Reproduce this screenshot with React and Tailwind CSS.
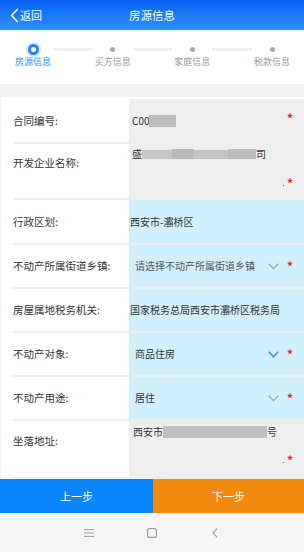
import React from "react";

function Step({ label, active }) {
  return (
    <div className="w-[40px] flex flex-col items-center">
      <div className="h-[11px] flex items-center justify-center">
        {active ? (
          <div className="w-[11px] h-[11px] rounded-full border-[3px] border-[#1f88f5] bg-white ring-2 ring-[#1f88f5]/20" />
        ) : (
          <div className="w-[5px] h-[5px] rounded-full bg-[#a9a9a9]" />
        )}
      </div>
      <div className={"mt-[1px] text-[9px] leading-[12px] whitespace-nowrap " + (active ? "text-[#2b8cf6]" : "text-[#9a9a9a]")}>
        {label}
      </div>
    </div>
  );
}

function Chevron({ color }) {
  return (
    <svg width="11" height="7" viewBox="0 0 11 7" className="mr-[8px]">
      <path d="M0.8 0.8 L5.5 5.8 L10.2 0.8" fill="none" stroke={color} strokeWidth="1.4" />
    </svg>
  );
}

const Star = () => <span className="text-[#f01c1c] text-[12px] leading-[10px] font-bold">*</span>;

function Sep() {
  return <div className="ml-[12px] h-[2px] bg-[#eeeeee]" />;
}

function Row({ label, bg, children, h }) {
  return (
    <div className={"flex " + h}>
      <div className="w-[128px] shrink-0 pl-[12px] flex items-center text-[10.5px] leading-[12px] text-[#333]">{label}</div>
      <div className={"flex-1 flex items-center pr-[11px] text-[10px] leading-[12px] text-[#333] " + bg}>{children}</div>
    </div>
  );
}

export default function App() {
  return (
    <div className="w-[304px] h-[552px] flex flex-col bg-[#f2f2f2] overflow-hidden font-['Noto_Sans_CJK_SC','Noto_Sans',sans-serif]">
      {/* header */}
      <div className="h-[30px] shrink-0 bg-linear-to-b from-[#0a5ff2] to-[#2e92fb] grid grid-cols-[1fr_auto_1fr] items-center text-white">
        <div className="flex items-center pl-[10px]">
          <svg width="9" height="15" viewBox="0 0 9 15">
            <path d="M7.8 1 L1.6 7.5 L7.8 14" fill="none" stroke="white" strokeWidth="1.5" />
          </svg>
          <span className="text-[11px] leading-[14px] ml-[1px]">返回</span>
        </div>
        <div className="text-[11.5px] leading-[14px]">房源信息</div>
        <div />
      </div>

      {/* steps */}
      <div className="h-[54px] shrink-0 bg-white flex items-start pl-[13px] pr-[12px] pt-[14px]">
        <Step label="房源信息" active />
        <div className="flex-1 h-[3px] bg-[#efefef] mt-[4px]" />
        <Step label="买方信息" />
        <div className="flex-1 h-[3px] bg-[#efefef] mt-[4px]" />
        <Step label="家庭信息" />
        <div className="flex-1 h-[3px] bg-[#efefef] mt-[4px]" />
        <Step label="税款信息" />
      </div>

      <div className="h-[13px] shrink-0" />

      {/* form */}
      <div className="flex-1 bg-white ml-[1px] pt-[2px] flex flex-col">
        <Row label="合同编号:" bg="bg-[#eeeeee] pl-[3px]" h="h-[43px]">
          <span>C00</span>
          <span className="w-[27px] h-[12px] bg-[#bdbdbd]" />
          <span className="ml-auto -mt-[3px]"><Star /></span>
        </Row>
        <Sep />
        <div className="flex h-[54px]">
          <div className="w-[128px] shrink-0 pl-[12px] pt-[13px] text-[10.5px] leading-[12px] text-[#333]">开发企业名称:</div>
          <div className="flex-1 bg-[#eeeeee] flex flex-col justify-between pl-[3px] pr-[11px] pt-[4px] pb-[10px] text-[10px] leading-[12px] text-[#333]">
            <div className="flex items-center">
              <span>盛</span>
              <span className="w-[30px] h-[9px] bg-[#c6c6c6]" />
              <span className="w-[22px] h-[10px] bg-[#bababa]" />
              <span className="w-[34px] h-[9px] bg-[#c4c4c4]" />
              <span className="w-[28px] h-[10px] bg-[#bcbcbc]" />
              <span>司</span>
            </div>
            <div className="flex items-end justify-end">
              <span className="w-[1px] h-[1px] bg-[#666] mr-[3px] mb-[2px]" />
              <Star />
            </div>
          </div>
        </div>
        <Sep />
        <Row label="行政区划:" bg="bg-[#cff0fc] pl-[1px]" h="h-[43px]">
          <span>西安市-灞桥区</span>
        </Row>
        <Sep />
        <Row label="不动产所属街道乡镇:" bg="bg-[#cff0fc] pl-[6px]" h="h-[42px]">
          <span className="text-[#555]">请选择不动产所属街道乡镇</span>
          <span className="ml-auto flex items-center">
            <Chevron color="#a8a8a8" />
            <Star />
          </span>
        </Row>
        <Sep />
        <Row label="房屋属地税务机关:" bg="bg-[#cff0fc] pl-[1px]" h="h-[42px]">
          <span>国家税务总局西安市灞桥区税务局</span>
        </Row>
        <Sep />
        <Row label="不动产对象:" bg="bg-[#cff0fc] pl-[6px]" h="h-[42px]">
          <span>商品住房</span>
          <span className="ml-auto flex items-center">
            <Chevron color="#2a8cf2" />
            <Star />
          </span>
        </Row>
        <Sep />
        <Row label="不动产用途:" bg="bg-[#cff0fc] pl-[6px]" h="h-[42px]">
          <span>居住</span>
          <span className="ml-auto flex items-center">
            <Chevron color="#a8a8a8" />
            <Star />
          </span>
        </Row>
        <Sep />
        <div className="flex h-[56px]">
          <div className="w-[128px] shrink-0 pl-[12px] pt-[14px] text-[10.5px] leading-[12px] text-[#333]">坐落地址:</div>
          <div className="flex-1 bg-[#eeeeee] flex flex-col justify-between pl-[4px] pr-[11px] pt-[5px] pb-[12px] text-[10px] leading-[12px] text-[#333]">
            <div className="flex items-center">
              <span>西安市</span>
              <span className="w-[104px] h-[12px] bg-[#c0c0c0]" />
              <span className="text-[#444]">号</span>
            </div>
            <div className="flex items-end justify-end">
              <span className="w-[1px] h-[1px] bg-[#666] mr-[3px] mb-[2px]" />
              <Star />
            </div>
          </div>
        </div>
        <Sep />
      </div>

      {/* buttons */}
      <div className="h-[34px] shrink-0 flex text-white text-[11px]">
        <div className="w-[153px] bg-[#0a86fd] flex items-center justify-center">上一步</div>
        <div className="flex-1 bg-[#f28a10] flex items-center justify-center">下一步</div>
      </div>

      {/* android nav */}
      <div className="h-[39px] shrink-0 bg-[#f6f6f6] flex items-center justify-center gap-[43px]">
        <div className="w-[20px] flex justify-center">
          <svg width="10" height="8" viewBox="0 0 10 8">
            <path d="M0 0.6 H10 M0 4 H10 M0 7.4 H10" stroke="#9a9a9a" strokeWidth="1" />
          </svg>
        </div>
        <div className="w-[20px] flex justify-center">
          <svg width="10" height="10" viewBox="0 0 10 10">
            <rect x="0.6" y="0.6" width="8.8" height="8.8" rx="2" fill="none" stroke="#9a9a9a" strokeWidth="1.1" />
          </svg>
        </div>
        <div className="w-[20px] flex justify-center">
          <svg width="6" height="10" viewBox="0 0 6 10">
            <path d="M5.2 0.6 L1 5 L5.2 9.4" fill="none" stroke="#9a9a9a" strokeWidth="1.1" />
          </svg>
        </div>
      </div>
    </div>
  );
}
